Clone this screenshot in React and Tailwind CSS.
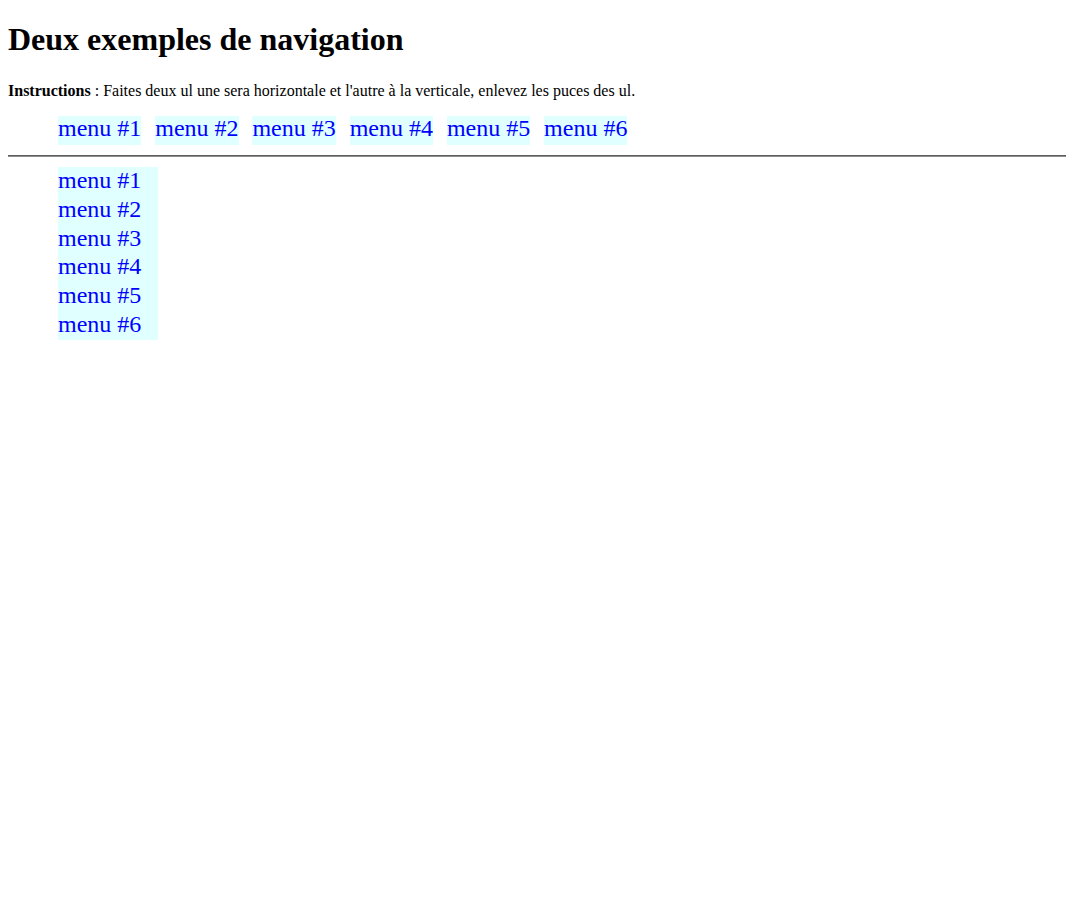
import React from 'react';

const items = ['menu #1', 'menu #2', 'menu #3', 'menu #4', 'menu #5', 'menu #6'];

export default function App() {
    return (
        <div className="min-h-screen bg-white text-black px-2" style={{ fontFamily: '"Liberation Serif", "Times New Roman", serif' }}>
            <h1 className="pt-[21px] text-[32px] leading-[36px] font-bold">Deux exemples de navigation</h1>

            <p className="mt-[25px] text-[16px] leading-[18px]">
                <b>Instructions</b> : Faites deux ul une sera horizontale et l'autre à la verticale, enlevez les puces des ul.
            </p>

            {/* horizontal nav */}
            <ul className="mt-[16px] pl-[50px] flex gap-[13.9px]">
                {items.map((item) => (
                    <li key={item} className="bg-[#e0ffff] text-[#0000ff] text-[24px] leading-[24px] pb-[5px]">
                        {item}
                    </li>
                ))}
            </ul>

            <hr className="mt-[10px] border-0 border-t border-b border-t-[#5e5e5e] border-b-[#8c8c8c]" />

            {/* vertical nav */}
            <ul className="mt-[10px] pl-[50px]">
                {items.map((item) => (
                    <li key={item} className="w-[100px] h-[28.8px] bg-[#e0ffff] text-[#0000ff] text-[24px] leading-[26px]">
                        {item}
                    </li>
                ))}
            </ul>
        </div>
    );
}
